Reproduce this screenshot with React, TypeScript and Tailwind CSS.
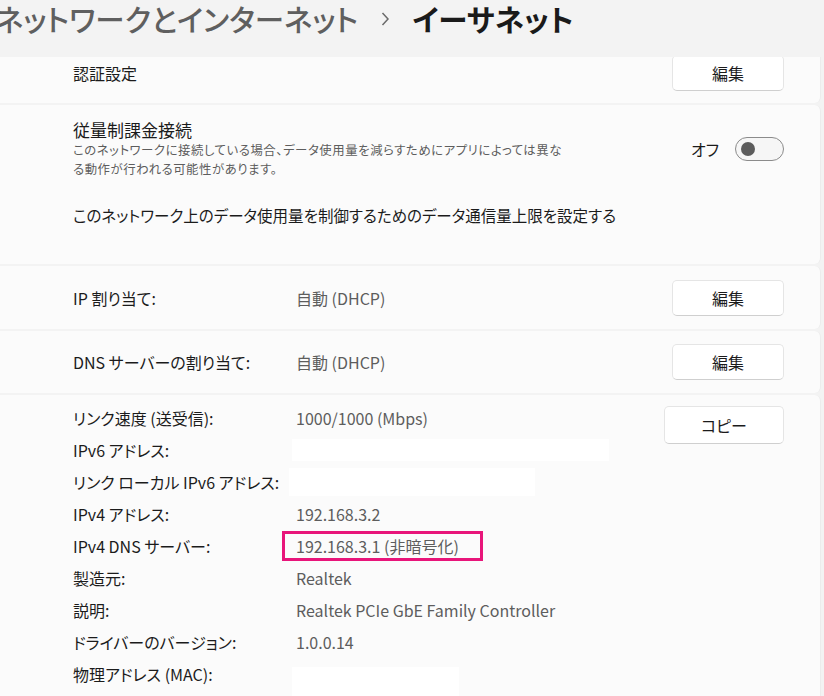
import React from "react";

const font = "font-['Noto_Sans_CJK_JP','Noto_Sans',sans-serif] [font-feature-settings:'palt']";

function EditButton({ label = "編集", w = "w-[112px]", h = "h-[36px]" }: { label?: string; w?: string; h?: string }) {
  return (
    <button
      className={`${w} ${h} rounded-[5px] border border-[#e5e5e5] border-b-[#cfcfcf] bg-white text-[16px] text-[#1b1b1b]`}
    >
      {label}
    </button>
  );
}

function Toggle() {
  return (
    <div className="flex h-[24px] w-[49px] items-center rounded-full border border-[#8b8b8b] bg-[#f6f6f6] px-[5px]">
      <span className="h-[14px] w-[14px] rounded-full bg-[#5c5c5c]" />
    </div>
  );
}

const props: { label: string; value?: string; kind?: "blank" | "mark"; blank?: string }[] = [
  { label: "リンク速度 (送受信):", value: "1000/1000 (Mbps)" },
  { label: "IPv6 アドレス:", kind: "blank", blank: "-ml-[4px] w-[317px] h-[22px]" },
  { label: "リンク ローカル IPv6 アドレス:", kind: "blank", blank: "-ml-[7px] w-[246px] h-[28px]" },
  { label: "IPv4 アドレス:", value: "192.168.3.2" },
  { label: "IPv4 DNS サーバー:", value: "192.168.3.1 (非暗号化)", kind: "mark" },
  { label: "製造元:", value: "Realtek" },
  { label: "説明:", value: "Realtek PCIe GbE Family Controller" },
  { label: "ドライバーのバージョン:", value: "1.0.0.14" },
  { label: "物理アドレス (MAC):", kind: "blank", blank: "-ml-[4px] w-[167px] h-[36px] mt-[22px]" },
];

export default function App() {
  return (
    <div className={`${font} h-[696px] w-[824px] overflow-hidden bg-[#f3f3f3] text-[#1b1b1b]`}>
      <header className="relative z-10 flex h-[57px] items-start bg-[#f3f3f3]">
        <div className="-ml-[5px] flex items-center whitespace-nowrap text-[29.5px] leading-[36px]">
          <span className="font-medium text-[#5f5f5f]">ネットワークとインターネット</span>
          <svg className="ml-[22px] mr-[22px] mt-[2px]" width="10" height="16" viewBox="0 0 10 16">
            <path d="M2.5 2 L8 8 L2.5 14" fill="none" stroke="#6a6a6a" strokeWidth="1.5" />
          </svg>
          <span className="font-bold text-[#1a1a1a]">イーサネット</span>
        </div>
      </header>

      <main className="flex w-[821px] flex-col gap-[2px]">
        <section className="-mt-[14px] flex h-[60px] items-center justify-between rounded-r-[6px] border-r border-[#ececec] bg-[#fbfbfb] pl-[73px] pr-[36px]">
          <span className="text-[16px]">認証設定</span>
          <EditButton />
        </section>

        <section className="h-[159px] rounded-r-[6px] border-r border-[#ececec] bg-[#fbfbfb] pl-[73px] pr-[36px] pt-[14px]">
          <div className="flex items-center justify-between">
            <div>
              <div className="text-[17px] leading-[22px]">従量制課金接続</div>
              <p className="w-[500px] text-[12.4px] leading-[19px] tracking-[0.55px] text-[#5d5d5d]">
                このネットワークに接続している場合、データ使用量を減らすためにアプリによっては異なる動作が行われる可能性があります。
              </p>
            </div>
            <div className="flex items-center gap-[16px]">
              <span className="text-[16px]">オフ</span>
              <Toggle />
            </div>
          </div>
          <div className="mt-[25px] text-[15.5px] leading-[22px]">
            このネットワーク上のデータ使用量を制御するためのデータ通信量上限を設定する
          </div>
        </section>

        <section className="flex h-[63px] items-center rounded-r-[6px] border-r border-[#ececec] bg-[#fbfbfb] pl-[73px] pr-[36px]">
          <span className="w-[223px] text-[16px]">IP 割り当て:</span>
          <span className="flex-1 text-[16px] text-[#5d5d5d]">自動 (DHCP)</span>
          <EditButton />
        </section>

        <section className="flex h-[62px] items-center rounded-r-[6px] border-r border-[#ececec] bg-[#fbfbfb] pl-[73px] pr-[36px]">
          <span className="w-[223px] text-[16px]">DNS サーバーの割り当て:</span>
          <span className="flex-1 text-[16px] text-[#5d5d5d]">自動 (DHCP)</span>
          <EditButton />
        </section>

        <section className="flex h-[320px] rounded-r-[6px] border-r border-[#ececec] bg-[#fbfbfb] pl-[73px] pr-[36px] pt-[7px]">
          <div className="flex-1">
            {props.map((p) => (
              <div key={p.label} className="flex h-[32px] items-center">
                <span className="w-[223px] shrink-0 text-[16px]">{p.label}</span>
                {p.kind === "blank" ? (
                  <span className={`block bg-white ${p.blank}`} />
                ) : p.kind === "mark" ? (
                  <span className="-ml-[14px] w-[201px] border-[3px] border-[#e8157a] pl-[11px] text-[16px] leading-[24px] text-[#5d5d5d]">
                    {p.value}
                  </span>
                ) : (
                  <span className="text-[16px] text-[#5d5d5d]">{p.value}</span>
                )}
              </div>
            ))}
          </div>
          <div className="pt-[4px]">
            <EditButton label="コピー" w="w-[120px]" h="h-[38px]" />
          </div>
        </section>
      </main>
    </div>
  );
}
